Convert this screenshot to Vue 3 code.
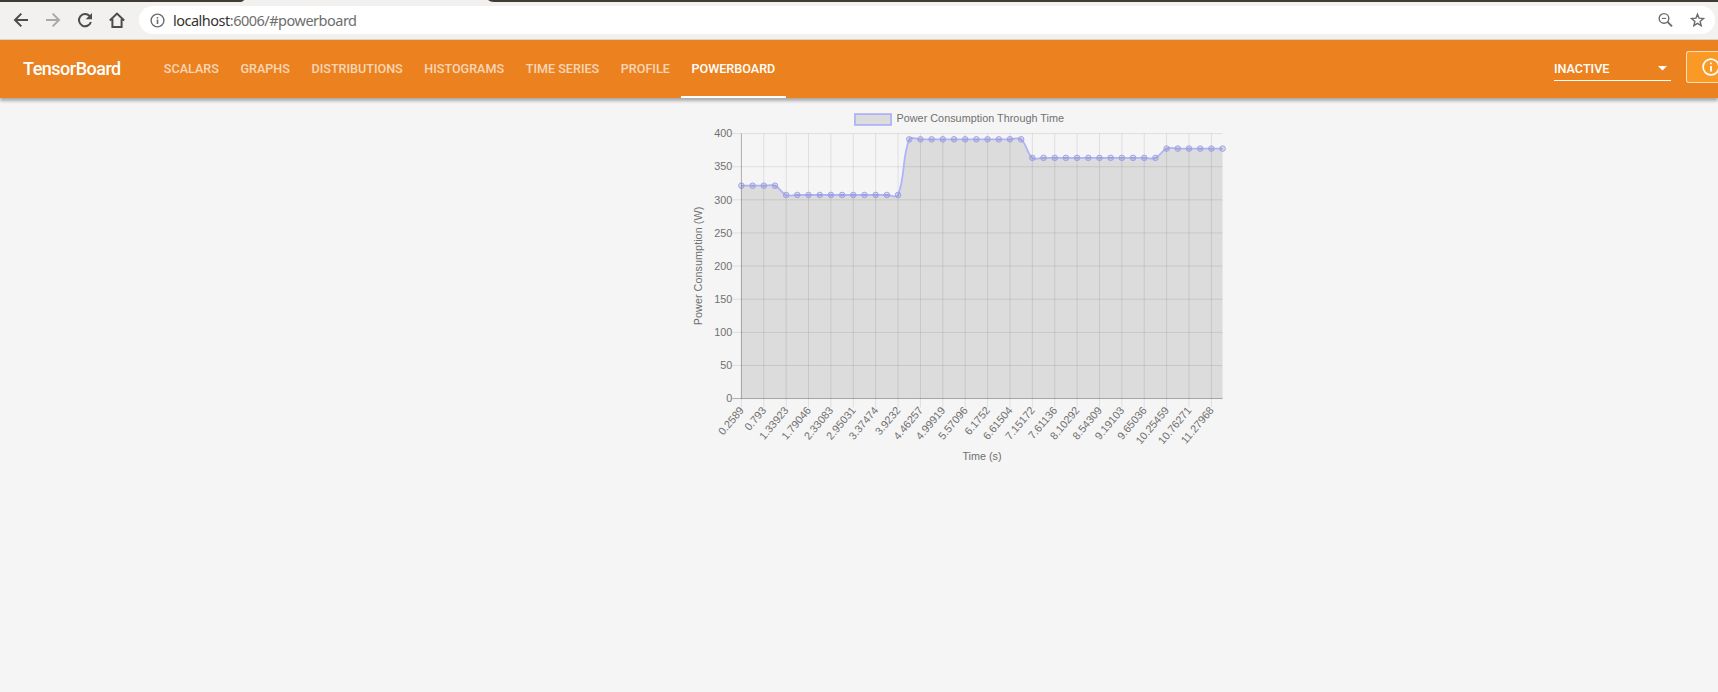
<script setup>
const left = 741.4
const top = 133.5
const bottom = 398.5
const step = 11.19
const values = [
  ...Array(4).fill(321.2),
  ...Array(11).fill(307.2),
  ...Array(11).fill(391.2),
  ...Array(12).fill(363.2),
  ...Array(6).fill(377.2),
]
const tabs = ['Scalars', 'Graphs', 'Distributions', 'Histograms', 'Time Series', 'Profile', 'Powerboard']
const times = ['0.2589', '0.793', '1.33923', '1.79046', '2.33083', '2.95031', '3.37474', '3.9232', '4.46257', '4.99919', '5.57096', '6.1752', '6.61504', '7.15172', '7.61136', '8.10292', '8.54309', '9.19103', '9.65036', '10.25459', '10.76271', '11.27968']
const right = left + step * (values.length - 1)
const yOf = (v) => bottom - (v / 400) * (bottom - top)
const points = values.map((v, i) => ({ x: left + i * step, y: yOf(v) }))
const yTicks = [0, 50, 100, 150, 200, 250, 300, 350, 400].map((v) => ({ v, y: yOf(v) + 0.1 }))
const xTicks = times.map((t, i) => ({ t, x: left + i * 2 * step }))

// Cubic spline with a tension of 0.4, weighted by segment length
const tension = 0.4
const controls = points.map((p, i) => {
  const a = points[i - 1] || p
  const b = points[i + 1] || p
  const d1 = Math.hypot(p.x - a.x, p.y - a.y)
  const d2 = Math.hypot(b.x - p.x, b.y - p.y)
  const f1 = (tension * d1) / (d1 + d2)
  const f2 = (tension * d2) / (d1 + d2)
  const dx = b.x - a.x
  const dy = b.y - a.y
  return { px: p.x - f1 * dx, py: p.y - f1 * dy, nx: p.x + f2 * dx, ny: p.y + f2 * dy }
})
const line = points.map((p, i) => i === 0
  ? `M${p.x} ${p.y}`
  : `C${controls[i - 1].nx} ${controls[i - 1].ny} ${controls[i].px} ${controls[i].py} ${p.x} ${p.y}`).join(' ')
const area = `${line} L${right} ${bottom} L${left} ${bottom} Z`
</script>

<template>
  <div class="window">
    <div class="browser">
      <svg class="strip" width="1718" height="2" viewBox="0 0 1718 2">
        <path d="M0 0H244Q243 2 239 2H0ZM488 0H1718V2H494Q490 2 488 0Z" fill="#3f3b34" />
      </svg>
      <div class="toolbar">
        <svg class="nav" width="139" height="34" viewBox="0 3 139 34" fill="none" stroke-width="2">
          <path d="M28 20H15.5M21.3 13.6L15 20L21.3 26.4" stroke="#4d4c4a" />
          <path d="M46 20H58.5M52.7 13.6L59 20L52.7 26.4" stroke="#aaa9a7" />
          <path d="M89.6 16A6.1 6.1 0 1 0 90.9 22" stroke="#4d4c4a" />
          <path d="M92 13V19.3H85.7Z" fill="#4d4c4a" />
          <path d="M109.8 20.4L117 13.6L124.2 20.4M112.4 19V27H121.6V19" stroke="#4d4c4a" />
        </svg>
        <div class="address">
          <svg class="info" width="15" height="15" viewBox="0 0 15 15">
            <circle cx="7.5" cy="7.5" r="6.4" fill="none" stroke="#6b6b6b" stroke-width="1.4" />
            <path d="M7.5 6.5V11M7.5 4V5.5" stroke="#6b6b6b" stroke-width="1.6" />
          </svg>
          <span class="url"><span class="host">localhost</span>:6006/#powerboard</span>
          <svg class="actions" width="50" height="18" viewBox="0 0 50 18" fill="none" stroke="#6b6b6b">
            <circle cx="7" cy="7.4" r="4.8" stroke-width="1.4" />
            <path d="M10.5 10.9L15 15.4" stroke-width="2" />
            <path d="M4.8 7.4H9.2" stroke-width="1.1" />
            <path d="M40.5 3.2L42.1 7.2L46.5 7.6L43.1 10.4L44.2 14.7L40.5 12.4L36.8 14.7L37.9 10.4L34.5 7.6L38.9 7.2Z" stroke-width="1.4" />
          </svg>
        </div>
      </div>
    </div>
    <header class="header">
      <div class="brand">TensorBoard</div>
      <nav class="tabs">
        <div v-for="t in tabs" :key="t" class="tab" :class="{ active: t === 'Powerboard' }">{{ t }}</div>
      </nav>
      <div class="select">
        <span>INACTIVE</span>
        <svg width="9" height="5" viewBox="0 0 9 5"><path d="M0 0H9L4.5 4.5Z" fill="#fff" /></svg>
      </div>
      <div class="help">
        <svg width="18" height="18" viewBox="0 0 18 18">
          <circle cx="9" cy="9" r="7.9" fill="none" stroke="#fff" stroke-width="1.6" />
          <path d="M9 8V13.5M9 4.5V6.3" stroke="#fff" stroke-width="1.8" />
        </svg>
      </div>
    </header>
    <main class="content">
      <svg class="chart" width="560" height="380" viewBox="680 98 560 380">
        <rect x="854.9" y="114.1" width="36.2" height="10.8" fill="#dcdcdc" stroke="#b0b3f8" stroke-width="1.8" />
        <text class="label" x="896.5" y="122.4" textLength="167.5">Power Consumption Through Time</text>
        <g class="grid">
          <line v-for="k in xTicks" :key="k.t" :x1="k.x" :x2="k.x" :y1="top" :y2="bottom + 9" />
          <line v-for="k in yTicks" :key="k.v" :x1="left - 9" :x2="right" :y1="k.y" :y2="k.y" />
        </g>
        <path :d="area" class="area" />
        <path :d="line" class="line" />
        <circle v-for="(p, i) in points" :key="i" :cx="p.x" :cy="p.y" r="2.8" class="dot" />
        <path :d="`M${left} ${top}V${bottom}M${left - 9} ${bottom}H${right}`" class="axis" />
        <text v-for="k in yTicks" :key="k.v" class="label" text-anchor="end" x="732.2" :y="k.y + 3.7">{{ k.v }}</text>
        <text v-for="k in xTicks" :key="k.t" class="label" text-anchor="end" :transform="`translate(${k.x} 408) rotate(-50)`" x="0" y="4">{{ k.t }}</text>
        <text class="label" text-anchor="middle" transform="translate(702 266) rotate(-90)" x="0" y="0" textLength="118.5">Power Consumption (W)</text>
        <text class="label" text-anchor="middle" x="982" y="459.8">Time (s)</text>
      </svg>
    </main>
  </div>
</template>

<style>
html, body { margin: 0; overflow: hidden; background: #f5f5f5; }
</style>
<style scoped>
.window { width: 1718px; height: 692px; overflow: hidden; background: #f5f5f5; display: flex; flex-direction: column; }
.browser { height: 40px; flex: none; box-sizing: border-box; background: #f2f1f0; border-bottom: 1px solid #d5d3d0; }
.strip { display: block; }
.toolbar { display: flex; padding-top: 1px; height: 34px; }
.nav { flex: none; width: 139px; }
.address { display: flex; align-items: center; width: 1576px; height: 28px; margin-top: 3px; border-radius: 14px; background: #fff; box-sizing: border-box; padding: 0 8.5px 0 10.5px; }
.info { flex: none; }
.url { margin-left: 8.5px; margin-top: -1px; font: 14.5px/20px "Noto Sans", sans-serif; letter-spacing: -.5px; color: #6e6e6e; white-space: nowrap; }
.host { color: #333; }
.actions { margin-left: auto; }
.header { position: relative; z-index: 1; flex: none; display: flex; height: 58px; background: #eb821f; color: #fff; font-family: Roboto, sans-serif; box-shadow: 0 3px 3px rgba(0, 0, 0, .3); }
.brand { width: 130px; padding-left: 23px; font-size: 18px; line-height: 58px; font-weight: 500; letter-spacing: -.5px; }
.tabs { display: flex; }
.tab { box-sizing: border-box; padding: 0 10.8px; line-height: 58px; font-size: 12.6px; font-weight: 500; text-transform: uppercase; color: rgba(255, 255, 255, .68); white-space: nowrap; }
.tab.active { color: #fff; box-shadow: inset 0 -2px #fff; }
.select { margin: 17px 15px 0 auto; width: 117px; height: 24px; box-sizing: border-box; border-bottom: 1px solid #fff; display: flex; align-items: center; justify-content: space-between; padding-right: 4px; font-size: 12.6px; font-weight: 500; }
.help { width: 32px; height: 32px; margin-top: 11px; box-sizing: border-box; border: 1px solid #f9ddbd; border-right: 0; border-radius: 3px 0 0 3px; background: #f99a27; overflow: hidden; padding: 6px 0 0 15px; }
.help svg { display: block; }
.content { display: flex; padding-left: 680px; }
.chart { display: block; flex: none; }
.label { font: 10.8px "Liberation Sans", Arial, sans-serif; fill: #707070; }
.grid { stroke: rgba(0, 0, 0, .09); stroke-width: 1; }
.area { fill: rgba(0, 0, 0, .1); }
.line { fill: none; stroke: #b0b3f8; stroke-width: 1.8; }
.dot { fill: rgba(0, 0, 0, .1); stroke: #9fa3f3; stroke-width: 1; }
.axis { fill: none; stroke: rgba(0, 0, 0, .22); stroke-width: 1; }
</style>
